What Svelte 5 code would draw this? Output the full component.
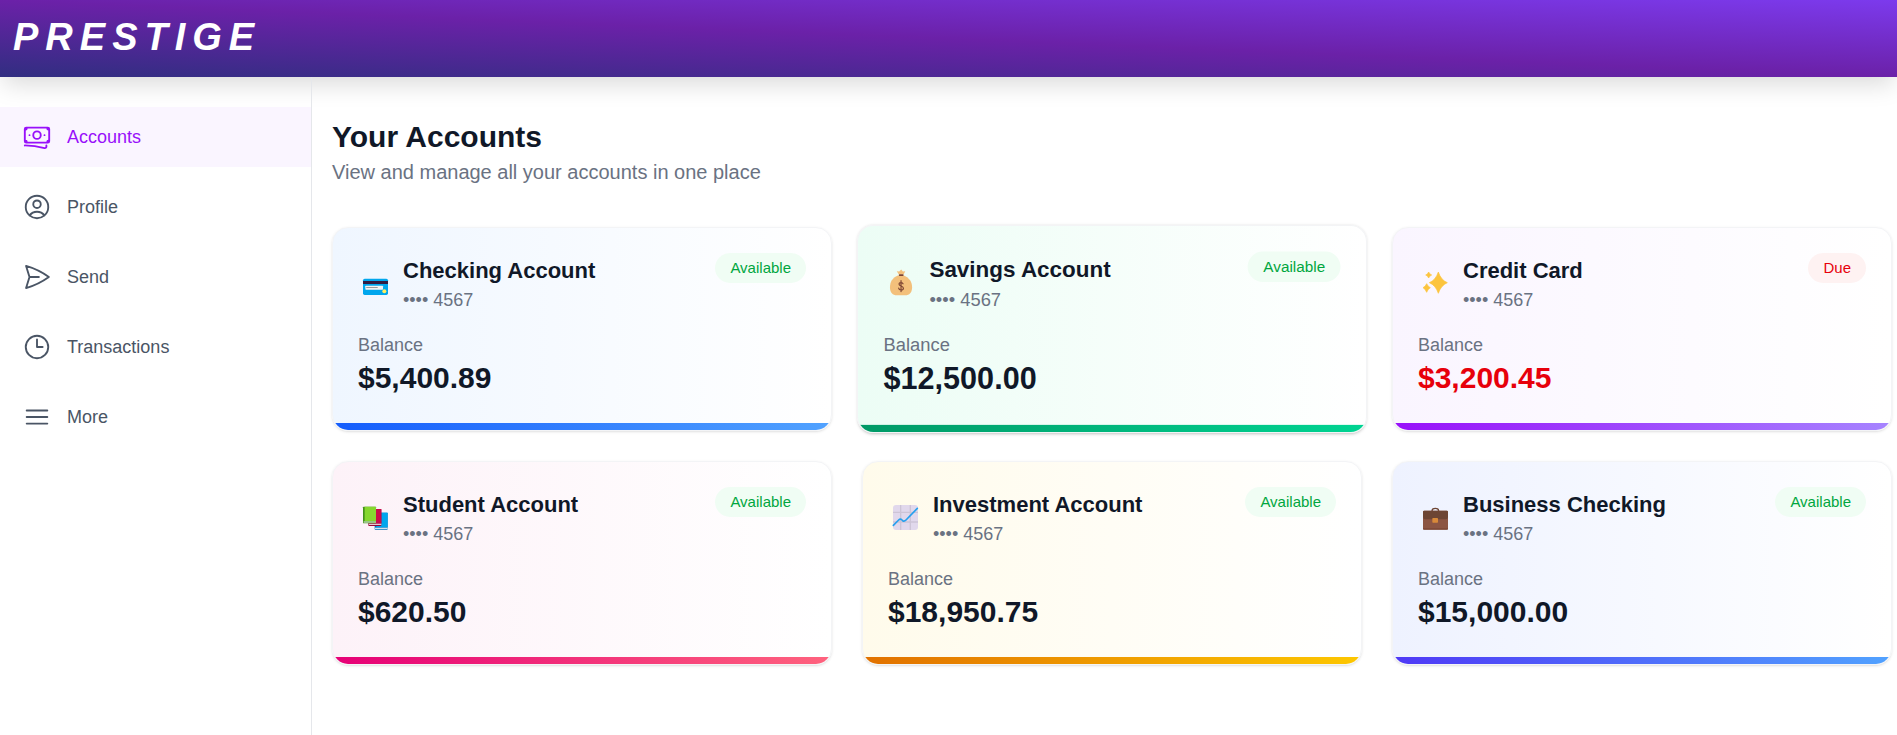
<script>
  const nav = [
    {
      label: 'Accounts',
      active: true,
      path: 'M2.25 18.75a60.07 60.07 0 0 1 15.797 2.101c.727.198 1.453-.342 1.453-1.096V18.75M3.75 4.5v.75A.75.75 0 0 1 3 6h-.75m0 0v-.375c0-.621.504-1.125 1.125-1.125H20.25M2.25 6v9m18-10.5v.75c0 .414.336.75.75.75h.75m-1.5-1.5h.375c.621 0 1.125.504 1.125 1.125v9.75c0 .621-.504 1.125-1.125 1.125h-.375m1.5-1.5H21a.75.75 0 0 0-.75.75v.75m0 0H3.75m0 0h-.375a1.125 1.125 0 0 1-1.125-1.125V15m1.5 1.5v-.75A.75.75 0 0 0 3 15h-.75M15 10.5a3 3 0 1 1-6 0 3 3 0 0 1 6 0Zm3 0h.008v.008H18V10.5Zm-12 0h.008v.008H6V10.5Z'
    },
    {
      label: 'Profile',
      path: 'M17.982 18.725A7.488 7.488 0 0 0 12 15.75a7.488 7.488 0 0 0-5.982 2.975m11.963 0a9 9 0 1 0-11.963 0m11.963 0A8.966 8.966 0 0 1 12 21a8.966 8.966 0 0 1-5.982-2.275M15 9.75a3 3 0 1 1-6 0 3 3 0 0 1 6 0Z'
    },
    {
      label: 'Send',
      path: 'M6 12 3.269 3.125A59.769 59.769 0 0 1 21.485 12 59.768 59.768 0 0 1 3.27 20.875L5.999 12Zm0 0h7.5'
    },
    { label: 'Transactions', path: 'M12 6v6h4.5m4.5 0a9 9 0 1 1-18 0 9 9 0 0 1 18 0Z' },
    { label: 'More', path: 'M3.75 6.75h16.5M3.75 12h16.5m-16.5 5.25h16.5' }
  ];

  const accounts = [
    { name: 'Checking Account', icon: 'card', tone: 'blue', status: 'Available', balance: '$5,400.89', box: '24 9 102 123' },
    { name: 'Savings Account', icon: 'bag', tone: 'emerald', status: 'Available', balance: '$12,500.00', box: '26 5 102 123', raised: true },
    { name: 'Credit Card', icon: 'sparkles', tone: 'purple', status: 'Due', balance: '$3,200.45', box: '24 9 102 123', due: true },
    { name: 'Student Account', icon: 'books', tone: 'pink', status: 'Available', balance: '$620.50', box: '24 6 102 123' },
    { name: 'Investment Account', icon: 'chart', tone: 'amber', status: 'Available', balance: '$18,950.75', box: '39 6 102 123' },
    { name: 'Business Checking', icon: 'case', tone: 'indigo', status: 'Available', balance: '$15,000.00', box: '24 6 102 123' }
  ];
</script>

<div class="page">
  <header><span class="logo">PRESTIGE</span></header>
  <div class="body">
    <nav>
      <ul>
        {#each nav as item}
          <li>
            <a href="#top" class:active={item.active}>
              <svg viewBox="0 0 24 24" aria-hidden="true"><path d={item.path} /></svg>
              {item.label}
            </a>
          </li>
        {/each}
      </ul>
    </nav>

    <main>
      <h1>Your Accounts</h1>
      <p class="sub">View and manage all your accounts in one place</p>
      <div class="grid">
        {#each accounts as a}
          <article class="card {a.tone}" class:raised={a.raised}>
            <div class="head">
              <svg class="emoji" viewBox={a.box} aria-hidden="true">
                {#if a.icon === 'card'}
                  <rect x="39" y="56" width="75" height="49" rx="5" fill="#00a6ed" />
                  <rect x="39" y="63" width="75" height="9" fill="#321b41" />
                  <rect x="46" y="77" width="53" height="12" rx="2" fill="#f4f4f4" />
                  <path d="M50 82.500H82" stroke="#9b9b9b" stroke-width="3" stroke-linecap="round" />
                  <circle cx="103" cy="94" r="6" fill="#ffef5e" />
                {:else if a.icon === 'bag'}
                  <path d="M71 43 65 33 72 34 78 28 83 34 90 33 85 43Z" fill="#f3c07b" />
                  <path d="M68 46C52 53 45 65 45 81c0 15 8 23 20 23h25c12 0 20-8 20-23 0-16-8-28-24-35Z" fill="#f3c07b" />
                  <rect x="71" y="42" width="14" height="5" rx="2" fill="#7d4533" />
                  <path d="M83.500 70c-1-4-12-5-12 1 0 7 13 4 13 12 0 7-13 7-14 0M77.500 61v32" fill="none" stroke="#7d4533" stroke-width="3.500" stroke-linecap="round" />
                {:else if a.icon === 'sparkles'}
                  <g fill="#fcc43e" stroke="#fcc43e" stroke-width="2" stroke-linejoin="round">
                    <path d="M85 36q8 24 27 32-19 8-27 32-8-24-27-32 19-8 27-32Z" />
                    <path d="M56 36q3 7 9 9-6 2-9 9-3-7-9-9 6-2 9-9Z" />
                    <path d="M50 71q4 9 11 12-7 3-11 14-4-11-11-14 7-3 11-12Z" />
                  </g>
                {:else if a.icon === 'books'}
                  <rect x="74" y="53" width="39" height="51" rx="2" fill="#0074ba" />
                  <path d="M79 53h34v44H79Z" fill="#00a6ed" />
                  <path d="M75 98h38v4H75Z" fill="#d3e4ee" />
                  <rect x="55" y="42" width="39" height="51" rx="2" fill="#990838" />
                  <path d="M60 42h34v43H60Z" fill="#ca0b4a" />
                  <path d="M57 86h37v4H57Z" fill="#e5cbd5" />
                  <rect x="39" y="35" width="39" height="50" rx="2" fill="#44911b" />
                  <path d="M44 35h34v43H44Z" fill="#86d72f" />
                  <path d="M41 79h37v4H41Z" fill="#c4dfbb" />
                {:else if a.icon === 'chart'}
                  <rect x="54" y="30" width="75" height="75" rx="9" fill="#e1d8ec" />
                  <path d="M77 30v75M106 30v75M54 52h75M54 81h75" stroke="#cdc4d6" stroke-width="4" />
                  <path d="M55 91 71 75Q76 70 81 75L83 77Q88 80 93 75L127 40" fill="none" stroke="#26a0ee" stroke-width="5" stroke-linecap="round" />
                {:else}
                  <path d="M66 48q0-8 10-8t10 8" fill="none" stroke="#6d4534" stroke-width="4" />
                  <rect x="39" y="47" width="75" height="57" rx="4" fill="#8c5543" />
                  <path d="M39 51q0-4 4-4h67q4 0 4 4v15q0 7-7 7H46q-7 0-7-7Z" fill="#6d4534" />
                  <path d="M39 102h75" stroke="#74402f" stroke-width="3" />
                  <rect x="67" y="69" width="17" height="14" rx="2" fill="#d8893a" />
                {/if}
              </svg>
              <div class="title">
                <h2>{a.name}</h2>
                <p>•••• 4567</p>
              </div>
              <span class="badge" class:due={a.due}>{a.status}</span>
            </div>
            <p class="label">Balance</p>
            <p class="amount" class:due={a.due}>{a.balance}</p>
            <div class="bar"></div>
          </article>
        {/each}
      </div>
    </main>
  </div>
</div>

<style>
  :global(body) {
    font-family: 'Liberation Sans', Arial, sans-serif;
    background: #fff;
    color: #101828;
  }
  h1, h2, p, ul { margin: 0; padding: 0; }
  .page { min-height: 100vh; display: flex; flex-direction: column; }
  header {
    padding: 9px 13px 11px;
    background: linear-gradient(to top right, #312e81, #6b21a8, #7c3aed);
    box-shadow: 0 10px 25px -3px rgb(0 0 0 / 0.15);
  }
  .logo {
    display: block;
    font-size: 38px;
    line-height: 57px;
    font-weight: 700;
    font-style: italic;
    letter-spacing: 7px;
    color: #fff;
  }
  .body { flex: 1; display: flex; }
  nav {
    width: 311px;
    flex: none;
    padding-top: 30px;
    border-right: 1px solid #e5e7eb;
  }
  ul { list-style: none; display: grid; gap: 10px; }
  a {
    display: flex;
    align-items: center;
    gap: 15px;
    height: 60px;
    padding: 0 22px;
    font-size: 18px;
    color: #4a5565;
    text-decoration: none;
  }
  a.active { background: #faf5ff; color: #9810fa; }
  a svg {
    width: 30px;
    height: 30px;
    fill: none;
    stroke: currentColor;
    stroke-width: 1.5;
    stroke-linecap: round;
    stroke-linejoin: round;
  }
  main { flex: 1; min-width: 0; padding: 40px 5px 40px 20px; }
  h1 { font-size: 30px; line-height: 40px; }
  .sub { font-size: 20px; line-height: 30px; color: #6a7282; }
  .grid {
    display: grid;
    grid-template-columns: repeat(3, minmax(0, 1fr));
    gap: 30px;
    margin-top: 40px;
  }
  .card {
    position: relative;
    overflow: hidden;
    padding: 25px 25px 33px;
    border: 1px solid #f3f4f6;
    border-radius: 16px;
    background: linear-gradient(to right, var(--tint), #fff);
    box-shadow: 0 1px 3px rgb(0 0 0 / 0.1), 0 1px 2px -1px rgb(0 0 0 / 0.1);
  }
  .raised { transform: scale(1.02); }
  .head { display: flex; align-items: center; gap: 11px; margin-bottom: 18px; }
  .emoji { width: 34px; height: 41px; flex: none; }
  .title { flex: 1; min-width: 0; padding-bottom: 2px; }
  h2 { font-size: 22px; line-height: 36px; }
  .title p { font-size: 18px; line-height: 23px; color: #6a7282; }
  .label { font-size: 18px; line-height: 27px; color: #6a7282; }
  .badge {
    align-self: flex-start;
    padding: 0 15px;
    border-radius: 15px;
    font-size: 15px;
    line-height: 30px;
    background: #f0fdf4;
    color: #00a63e;
  }
  .badge.due { background: #fef2f2; color: #e7000b; }
  .amount { font-size: 30px; line-height: 38px; font-weight: 700; }
  .amount.due { color: #e7000b; }
  .bar {
    position: absolute;
    left: 0;
    right: 0;
    bottom: 0;
    height: 7px;
    background: linear-gradient(to right, var(--from), var(--to));
  }
  .blue { --tint: #eff6ff; --from: #155dfc; --to: #51a2ff; }
  .emerald { --tint: #ecfdf5; --from: #009966; --to: #00d492; }
  .purple { --tint: #faf5ff; --from: #9810fa; --to: #a684ff; }
  .pink { --tint: #fdf2f8; --from: #e60076; --to: #ff637e; }
  .amber { --tint: #fffbeb; --from: #e17100; --to: #fdc700; }
  .indigo { --tint: #eef2ff; --from: #4f39f6; --to: #51a2ff; }
</style>
